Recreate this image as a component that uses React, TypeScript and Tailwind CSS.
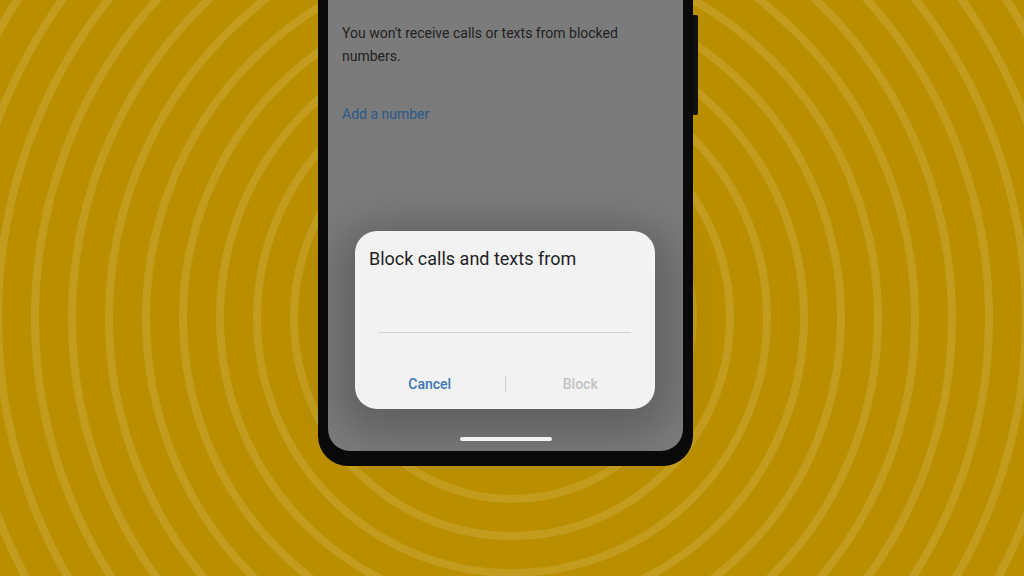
import React from "react";

const RINGS = Array.from({ length: 18 }, (_, k) => 33 + 37 * k);

function Rings() {
  return (
    <svg className="absolute inset-0 h-full w-full" viewBox="0 0 1024 576" preserveAspectRatio="none">
      {RINGS.map((r) => (
        <circle key={r} cx={512} cy={318} r={r} fill="none" stroke="#c39c1e" strokeWidth={8} />
      ))}
    </svg>
  );
}

function Dialog() {
  return (
    <div className="ml-[27px] mt-[107px] w-[300px] h-[178px] rounded-[22px] bg-[#f2f2f2] shadow-[0_10px_40px_16px_rgba(0,0,0,0.22)] flex flex-col">
      <div className="px-[14px] pt-[16px] text-[18px] leading-[24px] text-[#1f1f1f]">Block calls and texts from</div>
      <div className="mt-[61px] mx-[24px] h-px bg-[#c9d5dd]" />
      <div className="mt-[41px] h-[20px] flex items-center">
        <button className="flex-1 text-center text-[14px] font-medium text-[#3a78b8]">Cancel</button>
        <div className="h-[16px] w-px bg-[#cfcfcf]" />
        <button className="flex-1 text-center text-[14px] font-medium text-[#c4c4c4]">Block</button>
      </div>
    </div>
  );
}

export default function App() {
  return (
    <div
      className="relative w-[1024px] h-[576px] overflow-hidden bg-[#b98f00]"
      style={{ fontFamily: "Roboto, 'Noto Sans', sans-serif" }}
    >
      <Rings />
      <div className="relative ml-[318px] w-[375px] h-[466px] bg-[#0a0a0a] rounded-b-[30px] px-[10px] pb-[15px]">
        <div className="absolute right-[-5px] top-[15px] w-[5px] h-[100px] rounded-r-[2px] bg-[#111]" />
        <div className="h-full rounded-b-[22px] bg-[#7b7b7b] flex flex-col relative">
          <div className="pl-[14px] pt-[22px] text-[14px] leading-[23px] text-[#222]">
            You won't receive calls or texts from blocked
            <br />
            numbers.
          </div>
          <div className="pl-[14px] mt-[36px] text-[14px] leading-[20px] text-[#2c5a8c]">Add a number</div>
          <Dialog />
          <div className="mt-auto mb-[10px] mx-auto w-[92px] h-[4px] rounded-full bg-[#f2f2f2]" />
        </div>
      </div>
    </div>
  );
}
